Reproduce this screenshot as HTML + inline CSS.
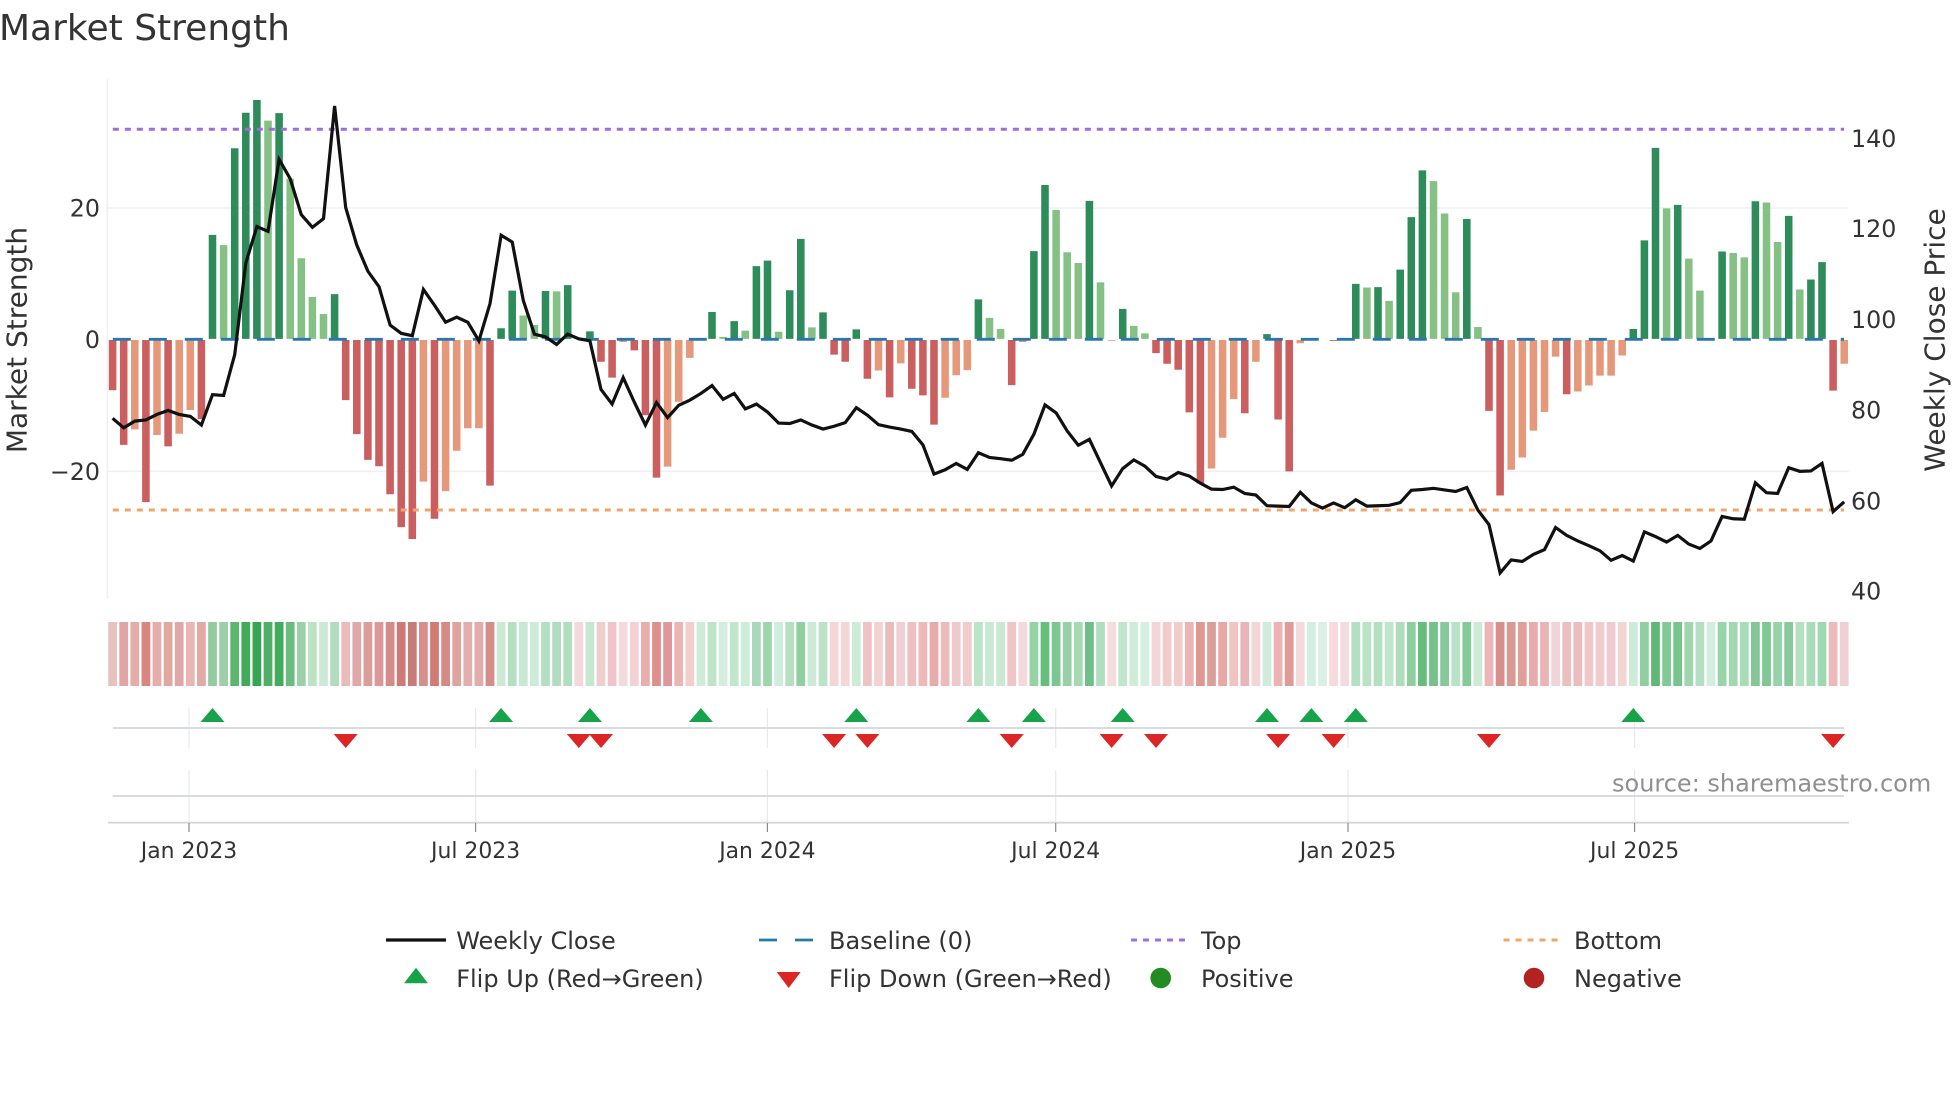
<!DOCTYPE html>
<html><head><meta charset="utf-8"><title>Market Strength</title>
<style>html,body{margin:0;padding:0;background:#fff}svg{display:block}text{font-family:"DejaVu Sans","Liberation Sans",sans-serif;fill:#333}</style></head>
<body>
<svg width="1960" height="1102" viewBox="0 0 1960 1102" xmlns="http://www.w3.org/2000/svg">
<rect width="1960" height="1102" fill="#fff"/>
<text x="-1" y="40" font-size="36">Market Strength</text>
<path d="M107.3 79V599M107 208H1849M107 471.3H1849" stroke="#eef0f5" stroke-width="1.6" fill="none"/>
<g transform="translate(112.6 0) scale(11.1 .39541)" fill="none" stroke-width=".68">
<path stroke="#cb5f5f" d="M0 860V987M1 860V1125M3 860V1270M5 860V1129M8 860V1060M21 860V1012M22 860V1098M23 860V1163M24 860V1179M25 860V1250M26 860V1333M27 860V1363M29 860V1312M34 860V1228M44 860V915M45 860V955M47 860V886M48 860V1050M49 860V1208M65 860V897M66 860V915M68 860V958M70 860V1005M72 860V983M73 860V1000M74 860V1074M81 860V974M90 860V861M94 860V893M95 860V920M96 860V935M97 860V1043M98 860V1222M102 860V1045M105 860V1061M106 860V1192M110 860V862M124 860V1039M125 860V1253M131 860V997M155 860V988"/>
<path stroke="#e6987b" d="M2 860V1086M4 860V1100M6 860V1097M7 860V1037M28 860V1218M30 860V1242M31 860V1140M32 860V1083M33 860V1083M46 860V865M50 860V1180M51 860V1016M52 860V905M69 860V937M71 860V919M75 860V1006M76 860V949M77 860V936M82 860V865M99 860V1185M100 860V1107M101 860V1009M103 860V915M107 860V868M126 860V1188M127 860V1157M128 860V1089M129 860V1042M130 860V902M132 860V990M133 860V975M134 860V950M135 860V950M136 860V899M156 860V920"/>
<path stroke="#2e8b5a" d="M9 857V594M11 857V375M12 857V285M13 857V253M15 857V286M20 857V744M35 857V830M36 857V735M39 857V736M41 857V721M43 857V838M54 857V789M56 857V812M58 857V673M59 857V659M61 857V734M62 857V604M64 857V790M67 857V833M78 857V757M83 857V635M84 857V468M88 857V508M91 857V781M104 857V845M112 857V718M114 857V726M116 857V682M117 857V549M118 857V431M122 857V554M137 857V832M138 857V608M139 857V374M141 857V518M145 857V636M148 857V509M151 857V546M153 857V707M154 857V663"/>
<path stroke="#85c085" d="M10 857V620M14 857V305M16 857V452M17 857V653M18 857V751M19 857V794M37 857V798M38 857V822M40 857V737M55 857V852M57 857V836M60 857V839M63 857V828M79 857V804M80 857V832M85 857V531M86 857V638M87 857V665M89 857V714M92 857V824M93 857V843M113 857V727M115 857V761M119 857V458M120 857V540M121 857V739M123 857V827M140 857V527M142 857V654M143 857V735M146 857V640M147 857V651M149 857V512M150 857V612M152 857V732"/>
</g>
<path d="M112.8 339.3H1844" stroke="#2a78ab" stroke-width="2.8" stroke-dasharray="18 18" fill="none"/>
<path d="M112.8 129.3H1844" stroke="#9d6bdc" stroke-width="3" stroke-dasharray="6 6" fill="none"/>
<path d="M112.8 510H1844" stroke="#f0a56a" stroke-width="3" stroke-dasharray="6 6" fill="none"/>
<g transform="translate(112.6 0) scale(11.1 .39541)">
<path fill="none" stroke="#111" stroke-width="3.2" stroke-linejoin="miter" vector-effect="non-scaling-stroke" d="M0 1058L1 1082 2 1065 3 1062 4 1048 5 1038 6 1048 7 1053 8 1075 9 998 10 1000 11 897 12 665 13 573 14 585 15 403 16 452 17 543 18 575 19 553 20 268 21 525 22 620 23 686 24 725 25 822 26 843 27 849 28 732 29 772 30 815 31 802 32 815 33 862 34 768 35 595 36 612 37 760 38 845 39 852 40 871 41 845 42 857 43 862 44 985 45 1022 46 955 47 1017 48 1075 49 1018 50 1056 51 1025 52 1012 53 995 54 975 55 1010 56 995 57 1034 58 1022 59 1042 60 1070 61 1071 62 1062 63 1075 64 1085 65 1078 66 1069 67 1031 68 1050 69 1074 70 1080 71 1085 72 1091 73 1125 74 1199 75 1188 76 1172 77 1187 78 1145 79 1157 80 1160 81 1164 82 1149 83 1098 84 1024 85 1044 86 1090 87 1126 88 1111 89 1170 90 1229 91 1185 92 1163 93 1179 94 1205 95 1212 96 1195 97 1204 98 1222 99 1237 100 1238 101 1232 102 1248 103 1252 104 1279 105 1280 106 1281 107 1245 108 1272 109 1285 110 1272 111 1284 112 1264 113 1280 114 1279 115 1278 116 1271 117 1240 118 1238 119 1235 120 1239 121 1243 122 1233 123 1290 124 1327 125 1449 126 1416 127 1420 128 1402 129 1390 130 1334 131 1354 132 1368 133 1380 134 1393 135 1417 136 1405 137 1419 138 1345 139 1357 140 1371 141 1354 142 1376 143 1387 144 1368 145 1306 146 1312 147 1313 148 1221 149 1246 150 1248 151 1183 152 1192 153 1191 154 1172 155 1294 156 1269"/>
</g>
<g font-size="23.75" text-anchor="end">
<text x="100" y="216.7">20</text><text x="100" y="348">0</text><text x="100" y="480">−20</text>
</g>
<g font-size="23.75">
<text x="1851" y="147.1">140</text><text x="1851" y="237.2">120</text><text x="1851" y="328.2">100</text><text x="1851" y="418.3">80</text><text x="1851" y="509.3">60</text><text x="1851" y="599.4">40</text>
</g>
<text transform="translate(26.5 340) rotate(-90)" font-size="28" text-anchor="middle">Market Strength</text>
<text transform="translate(1944.5 340) rotate(-90)" font-size="28" text-anchor="middle">Weekly Close Price</text>
<g transform="translate(112.6 0) scale(11.1 1)" fill="none" stroke-width=".79">
<path stroke="#e9c0c0" d="M0 622V686"/><path stroke="#e2a5a5" d="M1 622V686"/><path stroke="#e4aea8" d="M2 622V686"/><path stroke="#d98580" d="M3 622V686"/><path stroke="#e6adad" d="M4 622V686"/><path stroke="#e0a8a0" d="M5 622V686"/><path stroke="#dfa8a8" d="M6 622V686"/><path stroke="#e9b6b6" d="M7 622V686"/><path stroke="#e3a9a5" d="M8 622V686"/><path stroke="#93cb9f" d="M9 622V686"/>
<path stroke="#9dd0aa" d="M10 622V686"/><path stroke="#5db56f" d="M11 622V686"/><path stroke="#41aa5b" d="M12 622V686"/><path stroke="#38a554" d="M13 622V686"/><path stroke="#50ae68" d="M14 622V686"/><path stroke="#42ab5c" d="M15 622V686"/><path stroke="#6ebb82" d="M16 622V686"/><path stroke="#9dd0a8" d="M17 622V686"/><path stroke="#bde3c5" d="M18 622V686"/><path stroke="#cce9d6" d="M19 622V686"/>
<path stroke="#b1dcbe" d="M20 622V686"/><path stroke="#e9bcb9" d="M21 622V686"/><path stroke="#e0a9a9" d="M22 622V686"/><path stroke="#db9d99" d="M23 622V686"/><path stroke="#db9898" d="M24 622V686"/><path stroke="#d58b88" d="M25 622V686"/><path stroke="#cf7a78" d="M26 622V686"/><path stroke="#c67d78" d="M27 622V686"/><path stroke="#d88e8a" d="M28 622V686"/><path stroke="#d17c73" d="M29 622V686"/>
<path stroke="#d68a85" d="M30 622V686"/><path stroke="#dea49e" d="M31 622V686"/><path stroke="#e3aeae" d="M32 622V686"/><path stroke="#e3acac" d="M33 622V686"/><path stroke="#d68c88" d="M34 622V686"/><path stroke="#cde9d6" d="M35 622V686"/><path stroke="#b5dfc3" d="M36 622V686"/><path stroke="#c7e8d3" d="M37 622V686"/><path stroke="#cdeadb" d="M38 622V686"/><path stroke="#b3dfc2" d="M39 622V686"/>
<path stroke="#b3dbc2" d="M40 622V686"/><path stroke="#b0dfc0" d="M41 622V686"/><path stroke="#f3d8dc" d="M42 622V686"/><path stroke="#c6e8d3" d="M43 622V686"/><path stroke="#efcfce" d="M44 622V686"/><path stroke="#efc5cb" d="M45 622V686"/><path stroke="#f2dadd" d="M46 622V686"/><path stroke="#f2d2d5" d="M47 622V686"/><path stroke="#e9adae" d="M48 622V686"/><path stroke="#df8f8c" d="M49 622V686"/>
<path stroke="#e09799" d="M50 622V686"/><path stroke="#ebb5b3" d="M51 622V686"/><path stroke="#f0cfcd" d="M52 622V686"/><path stroke="#cfecd9" d="M53 622V686"/><path stroke="#bfe5c9" d="M54 622V686"/><path stroke="#d4ede0" d="M55 622V686"/><path stroke="#c0e6cc" d="M56 622V686"/><path stroke="#cfecd9" d="M57 622V686"/><path stroke="#a9d9b8" d="M58 622V686"/><path stroke="#9cd7ac" d="M59 622V686"/>
<path stroke="#d0ecdc" d="M60 622V686"/><path stroke="#b5e0c2" d="M61 622V686"/><path stroke="#8fcfa0" d="M62 622V686"/><path stroke="#cdead8" d="M63 622V686"/><path stroke="#bae3c7" d="M64 622V686"/><path stroke="#f5d6d6" d="M65 622V686"/><path stroke="#f3d6d6" d="M66 622V686"/><path stroke="#cdebd9" d="M67 622V686"/><path stroke="#eec3c3" d="M68 622V686"/><path stroke="#f2d2d2" d="M69 622V686"/>
<path stroke="#ecbcbd" d="M70 622V686"/><path stroke="#f0d0d5" d="M71 622V686"/><path stroke="#eec0c0" d="M72 622V686"/><path stroke="#edb9b9" d="M73 622V686"/><path stroke="#e8abab" d="M74 622V686"/><path stroke="#ecbcbc" d="M75 622V686"/><path stroke="#efcaca" d="M76 622V686"/><path stroke="#f0cccc" d="M77 622V686"/><path stroke="#bbe5c6" d="M78 622V686"/><path stroke="#c8e9d3" d="M79 622V686"/>
<path stroke="#c9e9d3" d="M80 622V686"/><path stroke="#f0c5c5" d="M81 622V686"/><path stroke="#f3d8dc" d="M82 622V686"/><path stroke="#97d2a6" d="M83 622V686"/><path stroke="#67bd7e" d="M84 622V686"/><path stroke="#7cc691" d="M85 622V686"/><path stroke="#98cfa6" d="M86 622V686"/><path stroke="#a5dab3" d="M87 622V686"/><path stroke="#6fc088" d="M88 622V686"/><path stroke="#b0dfbf" d="M89 622V686"/>
<path stroke="#f6dcdc" d="M90 622V686"/><path stroke="#c0e6cd" d="M91 622V686"/><path stroke="#cfecd9" d="M92 622V686"/><path stroke="#d5efe0" d="M93 622V686"/><path stroke="#f3d6d8" d="M94 622V686"/><path stroke="#f1cccd" d="M95 622V686"/><path stroke="#f0cccb" d="M96 622V686"/><path stroke="#ebb5b5" d="M97 622V686"/><path stroke="#e09792" d="M98 622V686"/><path stroke="#d99f99" d="M99 622V686"/>
<path stroke="#e8a8a5" d="M100 622V686"/><path stroke="#efc4c1" d="M101 622V686"/><path stroke="#e8b5b8" d="M102 622V686"/><path stroke="#f3d6d6" d="M103 622V686"/><path stroke="#d0ecdc" d="M104 622V686"/><path stroke="#ecb2b4" d="M105 622V686"/><path stroke="#e29a98" d="M106 622V686"/><path stroke="#f4dada" d="M107 622V686"/><path stroke="#d3efe0" d="M108 622V686"/><path stroke="#d9f0e5" d="M109 622V686"/>
<path stroke="#f6dadd" d="M110 622V686"/><path stroke="#f3dce0" d="M111 622V686"/><path stroke="#b3dfc2" d="M112 622V686"/><path stroke="#bae3c5" d="M113 622V686"/><path stroke="#b5e0c0" d="M114 622V686"/><path stroke="#c0e6cc" d="M115 622V686"/><path stroke="#aedcbc" d="M116 622V686"/><path stroke="#8fce9f" d="M117 622V686"/><path stroke="#66bd7c" d="M118 622V686"/><path stroke="#75c18b" d="M119 622V686"/>
<path stroke="#88c99b" d="M120 622V686"/><path stroke="#b9e3c8" d="M121 622V686"/><path stroke="#85ca98" d="M122 622V686"/><path stroke="#cbead7" d="M123 622V686"/><path stroke="#edb5b7" d="M124 622V686"/><path stroke="#d78f8c" d="M125 622V686"/><path stroke="#d89a97" d="M126 622V686"/><path stroke="#e29f98" d="M127 622V686"/><path stroke="#e8abab" d="M128 622V686"/><path stroke="#ebb3b3" d="M129 622V686"/>
<path stroke="#efd5d8" d="M130 622V686"/><path stroke="#ecbfc1" d="M131 622V686"/><path stroke="#ecbdbc" d="M132 622V686"/><path stroke="#efc8c9" d="M133 622V686"/><path stroke="#f0cccd" d="M134 622V686"/><path stroke="#efcbcf" d="M135 622V686"/><path stroke="#f2d6d6" d="M136 622V686"/><path stroke="#cdebd9" d="M137 622V686"/><path stroke="#90cfa2" d="M138 622V686"/><path stroke="#5fb875" d="M139 622V686"/>
<path stroke="#82c995" d="M140 622V686"/><path stroke="#78c48d" d="M141 622V686"/><path stroke="#a0d6ae" d="M142 622V686"/><path stroke="#b5dfc3" d="M143 622V686"/><path stroke="#d3eee1" d="M144 622V686"/><path stroke="#98d3a9" d="M145 622V686"/><path stroke="#a3d6b2" d="M146 622V686"/><path stroke="#a8dcb8" d="M147 622V686"/><path stroke="#82c795" d="M148 622V686"/><path stroke="#7fc893" d="M149 622V686"/>
<path stroke="#97d3a8" d="M150 622V686"/><path stroke="#89ca9c" d="M151 622V686"/><path stroke="#b5e0c2" d="M152 622V686"/><path stroke="#a9dcb8" d="M153 622V686"/><path stroke="#a0d9b0" d="M154 622V686"/><path stroke="#edbabc" d="M155 622V686"/><path stroke="#eed0d5" d="M156 622V686"/>
</g>
<path d="M189 708V748M189 770V823M475.6 708V748M475.6 770V823M767.4 708V748M767.4 770V823M1055.7 708V748M1055.7 770V823M1348 708V748M1348 770V823M1634.6 708V748M1634.6 770V823" stroke="#e8eaf0" stroke-width="1.3" fill="none"/>
<path d="M112.8 728H1844M112.8 796H1844M108 822.7H1849" stroke="#d3d6db" stroke-width="1.8" fill="none"/>
<path d="M189 823V832M475.6 823V832M767.4 823V832M1055.7 823V832M1348 823V832M1634.6 823V832" stroke="#8a8a8a" stroke-width="1.2" fill="none"/>
<path fill="#16a34a" d="M212.5 708l12 14h-24zM501.1 708l12 14h-24zM589.9 708l12 14h-24zM700.9 708l12 14h-24zM856.3 708l12 14h-24zM978.4 708l12 14h-24zM1033.9 708l12 14h-24zM1122.7 708l12 14h-24zM1267 708l12 14h-24zM1311.4 708l12 14h-24zM1355.8 708l12 14h-24zM1633.3 708l12 14h-24z"/>
<path fill="#dc2626" d="M345.7 748l12-14h-24zM578.8 748l12-14h-24zM601 748l12-14h-24zM834.1 748l12-14h-24zM867.4 748l12-14h-24zM1011.7 748l12-14h-24zM1111.6 748l12-14h-24zM1156 748l12-14h-24zM1278.1 748l12-14h-24zM1333.6 748l12-14h-24zM1489 748l12-14h-24zM1833.1 748l12-14h-24z"/>
<g font-size="21.9" text-anchor="middle">
<text x="189" y="858">Jan 2023</text><text x="475.6" y="858">Jul 2023</text><text x="767.4" y="858">Jan 2024</text><text x="1055.7" y="858">Jul 2024</text><text x="1348" y="858">Jan 2025</text><text x="1634.6" y="858">Jul 2025</text>
</g>
<text x="1612" y="791.5" font-size="24" style="fill:#909090">source: sharemaestro.com</text>
<g font-size="24">
<text x="456.2" y="949">Weekly Close</text><text x="829" y="949">Baseline (0)</text><text x="1201" y="949">Top</text><text x="1574" y="949">Bottom</text>
<text x="456.2" y="987">Flip Up (Red→Green)</text><text x="829" y="987">Flip Down (Green→Red)</text><text x="1201" y="987">Positive</text><text x="1574" y="987">Negative</text>
</g>
<path d="M386 940H446" stroke="#111" stroke-width="3.2" fill="none"/>
<path d="M759 940H813" stroke="#2a78ab" stroke-width="2.8" stroke-dasharray="18 18" fill="none"/>
<path d="M1131 940H1187" stroke="#a070d8" stroke-width="3" stroke-dasharray="6 6" fill="none"/>
<path d="M1503.5 940H1559" stroke="#f0a56a" stroke-width="3" stroke-dasharray="6 6" fill="none"/>
<path fill="#16a34a" d="M416 967.7l12 15.6h-24z"/>
<path fill="#dc2626" d="M788.7 988l12-16h-24z"/>
<circle cx="1160.7" cy="978" r="10.3" fill="#228b22"/>
<circle cx="1534" cy="978" r="10.3" fill="#b22222"/>
</svg>
</body></html>
